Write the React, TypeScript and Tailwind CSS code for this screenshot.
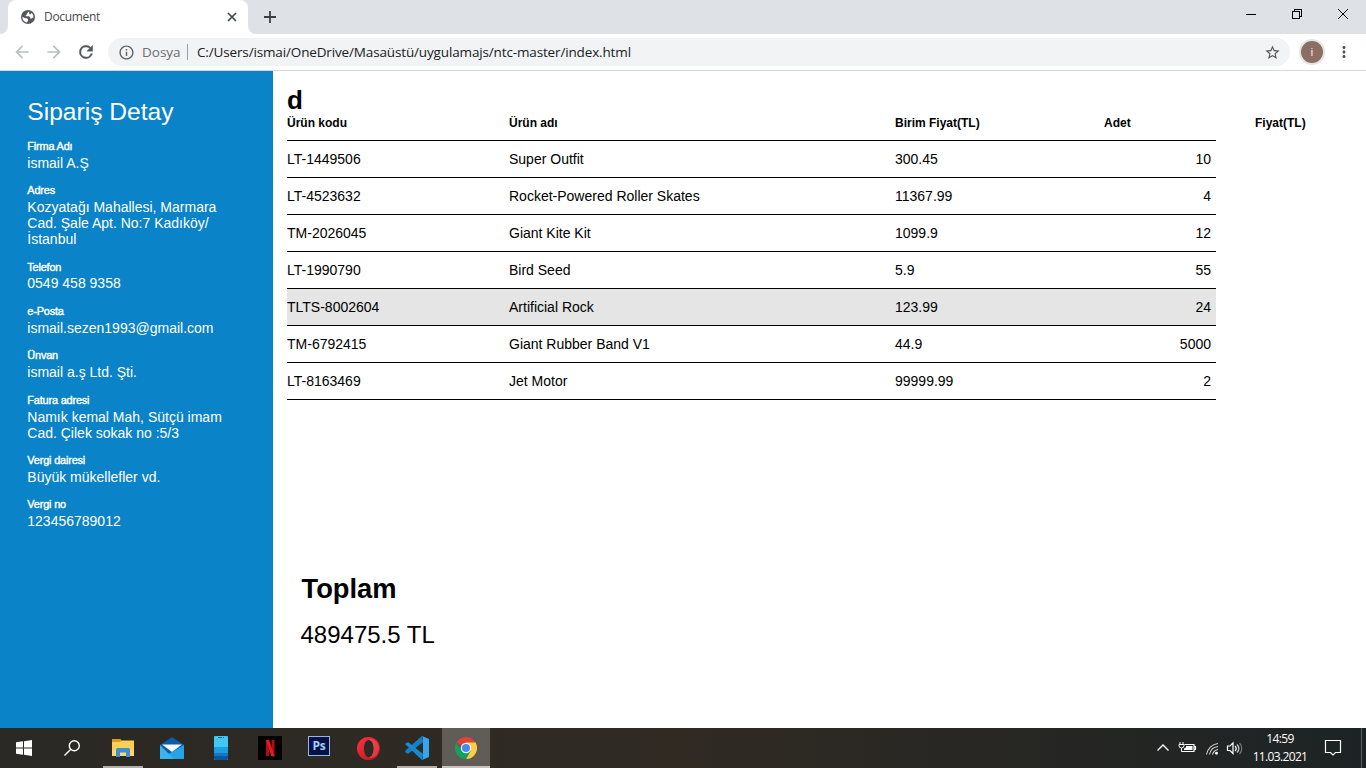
import React from "react";
import {
  MdArrowBack,
  MdArrowForward,
  MdInfoOutline,
  MdStarBorder,
  MdMoreVert,
} from "react-icons/md";

const details: { label: string; lines: string[] }[] = [
  { label: "Firma Adı", lines: ["ismail A.Ş"] },
  { label: "Adres", lines: ["Kozyatağı Mahallesi, Marmara", "Cad. Şale Apt. No:7 Kadıköy/", "İstanbul"] },
  { label: "Telefon", lines: ["0549 458 9358"] },
  { label: "e-Posta", lines: ["ismail.sezen1993@gmail.com"] },
  { label: "Ünvan", lines: ["ismail a.ş Ltd. Şti."] },
  { label: "Fatura adresi", lines: ["Namık kemal Mah, Sütçü imam", "Cad. Çilek sokak no :5/3"] },
  { label: "Vergi dairesi", lines: ["Büyük mükellefler vd."] },
  { label: "Vergi no", lines: ["123456789012"] },
];

const rows = [
  ["LT-1449506", "Super Outfit", "300.45", "10"],
  ["LT-4523632", "Rocket-Powered Roller Skates", "11367.99", "4"],
  ["TM-2026045", "Giant Kite Kit", "1099.9", "12"],
  ["LT-1990790", "Bird Seed", "5.9", "55"],
  ["TLTS-8002604", "Artificial Rock", "123.99", "24"],
  ["TM-6792415", "Giant Rubber Band V1", "44.9", "5000"],
  ["LT-8163469", "Jet Motor", "99999.99", "2"],
];

function TabStrip() {
  return (
    <div className="flex h-[34px] bg-[#dee1e6]">
      <div className="flex w-2 items-end bg-white">
        <div className="h-full w-2 rounded-br-lg bg-[#dee1e6]" />
      </div>
      <div className="bg-[#dee1e6]">
        <div className="flex h-[34px] w-[240px] items-center rounded-t-lg bg-white pl-[13px] pr-2.5">
          <svg className="size-[14px]" viewBox="0 0 14 14">
            <circle cx="7" cy="7" r="7" fill="#54585c" />
            <path
              d="M7.800 1.500L6.200 3v1.200L4.800 5v1.300h3.300l1.100 1.200v1h1.400l1.900-1.300A5.600 5.600 0 0 0 10.600 2.800L9.800 4.300H8.300V3.100zM1.400 6.800l2.800 1.400h1.900l1 1v1.300L6 12.500A5.600 5.600 0 0 1 1.400 6.800z"
              fill="#fff"
            />
          </svg>
          <span className="ml-[9px] flex-1 text-[12px] tracking-[-0.32px] text-[#45494d]">Document</span>
          <svg className="size-3" viewBox="0 0 12 12" stroke="#45494d" strokeWidth="1.7">
            <path d="M2 2l8 8M10 2l-8 8" />
          </svg>
        </div>
      </div>
      <div className="w-2 bg-white">
        <div className="h-full w-2 rounded-bl-lg bg-[#dee1e6]" />
      </div>
      <svg className="ml-2 mt-[11px] size-3" viewBox="0 0 12 12" stroke="#3c4043" strokeWidth="1.8">
        <path d="M6 0v12M0 6h12" />
      </svg>
      <div className="flex-1" />
      <svg className="h-[34px] w-[138px]" viewBox="0 0 138 34" fill="none" stroke="#000" shapeRendering="crispEdges">
        <path d="M18 14.5h10" />
        <path d="M64.500 11.500h7v7h-7zM66.500 11.500v-2h7v7h-2" />
        <path d="M110 9l10 10M120 9l-10 10" shapeRendering="auto" />
      </svg>
    </div>
  );
}

function Toolbar() {
  return (
    <div className="flex h-[37px] items-center border-b border-[#d5d8db] bg-white pl-3">
      <MdArrowBack className="size-5 text-[#bcbec0]" />
      <MdArrowForward className="ml-3 size-5 text-[#bcbec0]" />
      <svg className="ml-3 size-5" viewBox="0 0 24 24" fill="#54585c" stroke="#54585c" strokeWidth="0.5">
        <path d="M17.650 6.350A7.958 7.958 0 0 0 12 4a8 8 0 1 0 7.730 10h-2.080A6 6 0 1 1 12 6c1.660 0 3.140.690 4.220 1.780L13 11h7V4z" />
      </svg>
      <div className="ml-3 flex h-7 w-[1182px] items-center rounded-full bg-[#f1f3f4] pl-2.5 pr-[9px]">
        <MdInfoOutline className="size-[17px] text-[#5f6368]" />
        <span className="ml-[7px] w-[38px] whitespace-nowrap text-[13.5px] text-[#6a6e72]">Dosya</span>
        <span className="ml-[7px] h-4 w-px bg-[#9aa0a6]" />
        <span className="ml-[9px] flex-1 whitespace-nowrap text-[13.500px] tracking-[-0.145px] text-[#202124]">
          C:/Users/ismai/OneDrive/Masaüstü/uygulamajs/ntc-master/index.html
        </span>
        <MdStarBorder className="size-[17px] text-[#54585c]" />
      </div>
      <div className="ml-[9px] flex size-[26px] items-center justify-center rounded-full border-2 border-[#e4e4e5] bg-[#8d6e63] text-[11px] text-white">
        i
      </div>
      <MdMoreVert className="ml-2.5 size-[18px] text-[#4c5054]" />
    </div>
  );
}

function Sidebar() {
  return (
    <aside className="w-[273px] shrink-0 bg-[#0a83c8] pl-[27.300px] pt-[26px] text-white">
      <h1 className="mb-[12.950px] text-[24.6px] leading-[30px]">Sipariş Detay</h1>
      {details.map((d) => (
        <div key={d.label} className="mb-[13.600px]">
          <div className="mb-[2.780px] text-[10.93px] leading-3 tracking-[-0.18px] [-webkit-text-stroke:0.4px_white]">
            {d.label}
          </div>
          {d.lines.map((l) => (
            <div key={l} className="whitespace-nowrap text-[14px] leading-4">
              {l}
            </div>
          ))}
        </div>
      ))}
    </aside>
  );
}

function Orders() {
  return (
    <main className="flex-1 bg-white pl-3.5 pt-3.5 text-black">
      <div className="text-[26px] font-bold leading-[30px]">d</div>
      <div className="flex h-[25px] whitespace-nowrap text-[12px] font-bold leading-4">
        <div className="w-[222px]">Ürün kodu</div>
        <div className="w-[386px]">Ürün adı</div>
        <div className="w-[209px]">Birim Fiyat(TL)</div>
        <div className="w-[151px]">Adet</div>
        <div>Fiyat(TL)</div>
      </div>
      <div className="w-[929px] border-t border-black">
        {rows.map((r, i) => (
          <div
            key={r[0]}
            className={`flex h-[37px] items-center border-b border-black pr-[5px] text-[14px] ${i === 4 ? "bg-[#e5e5e5]" : ""}`}
          >
            <div className="w-[222px]">{r[0]}</div>
            <div className="w-[386px]">{r[1]}</div>
            <div className="w-[209px]">{r[2]}</div>
            <div className="flex-1 text-right">{r[3]}</div>
          </div>
        ))}
      </div>
      <div className="pl-[13.500px] pt-[173px]">
        <h2 className="pl-px text-[27.300px] font-bold leading-8">Toplam</h2>
        <p className="mt-3.5 text-[24px] leading-8">489475.5 TL</p>
      </div>
    </main>
  );
}

function AppSlot({ children, tone = "", bar = "" }: { children: React.ReactNode; tone?: string; bar?: string }) {
  return (
    <div className={`flex h-10 w-12 flex-col items-center ${tone}`}>
      <div className="flex h-[38px] items-center pt-0.5">{children}</div>
      <div className={`h-0.5 ${bar}`} />
    </div>
  );
}

function Taskbar() {
  return (
    <footer className="flex h-10 items-center bg-gradient-to-r from-[#2b2925] via-[#302a23] to-[#1d2324] text-white">
      <AppSlot>
        <svg className="size-4" viewBox="0 0 16 16" fill="#fff">
          <path d="M0 2.300l7-1v6.200H0zM8 1.200L16 0v7.500H8zM0 8.500h7v6.200l-7-1zM8 8.500h8V16l-8-1.200z" />
        </svg>
      </AppSlot>
      <AppSlot>
        <svg className="size-[18px]" viewBox="0 0 18 18" fill="none" stroke="#fff" strokeWidth="1.4">
          <circle cx="11.300" cy="6.700" r="5" />
          <path d="M7.800 10.200L1.500 16.500" />
        </svg>
      </AppSlot>
      <div className="w-[3px]" />
      <AppSlot bar="w-10 bg-[#b3aea9]">
        <svg className="h-[18px] w-[22px]" viewBox="0 0 22 18">
          <path d="M0 0h8l1.500 1.500H22V17H0z" fill="#f9cf57" />
          <path d="M0 0h8l1.200 1.500L8 3H0z" fill="#dc9a16" />
          <path d="M0 11h22v6H0z" fill="#fbd970" />
          <path d="M4 18v-7.500a1.500 1.500 0 0 1 1.500-1.500h11a1.500 1.500 0 0 1 1.500 1.500V18h-4v-4.500H8V18z" fill="#3f8fd0" />
        </svg>
      </AppSlot>
      <div className="w-px" />
      <AppSlot>
        <svg className="h-6 w-6" viewBox="0 0 24 24">
          <path d="M0 9L12 1l12 8v14H0z" fill="#0d5aa7" />
          <path d="M2 8.500h20L12 16z" fill="#f5f7f9" />
          <path d="M24 9v14H0z" fill="#25a3e4" />
          <path d="M0 9l14 14H0z" fill="#36b5ee" />
        </svg>
      </AppSlot>
      <div className="w-px" />
      <AppSlot>
        <svg className="h-6 w-3.5" viewBox="0 0 14 24">
          <rect width="14" height="24" rx="1" fill="#43c6f3" />
          <path d="M0 11h14v6H0z" fill="#1c9de2" />
          <path d="M0 17h14v3H0z" fill="#1277c5" />
          <path d="M0 20h14v3l-1 1H1l-1-1z" fill="#0b569c" />
          <path d="M4 1.500h4M9 1.500h1" stroke="#0e679f" />
        </svg>
      </AppSlot>
      <div className="w-px" />
      <AppSlot>
        <svg className="size-6" viewBox="0 0 24 24">
          <path d="M0 0h24v24H0z" fill="#000" />
          <path d="M8 4h3v16l-3 .5zM13.500 4h3v16.500l-3-.5z" fill="#b20d16" />
          <path d="M8 4h3.200l5.300 16.500-3.200-.5z" fill="#e51b24" />
        </svg>
      </AppSlot>
      <div className="w-px" />
      <AppSlot>
        <div className="-mt-1 flex h-5 w-[22px] items-center justify-center border border-[#8db9ef] bg-[#071243] text-[12px] font-bold leading-none tracking-[-0.3px] text-[#a1cbff]">
          Ps
        </div>
      </AppSlot>
      <div className="w-px" />
      <AppSlot>
        <svg className="size-[23px]" viewBox="0 0 24 24">
          <defs>
            <linearGradient id="operaRed" x1="0" y1="0" x2="1" y2="1">
              <stop stopColor="#ff3443" />
              <stop offset="1" stopColor="#b80e1b" />
            </linearGradient>
          </defs>
          <path
            fill="url(#operaRed)"
            fillRule="evenodd"
            d="M12 0a12 12 0 1 0 0 24a12 12 0 1 0 0-24zM12.300 3c3 0 5 4 5 9s-2 9-5 9-5-4-5-9 2-9 5-9z"
          />
          <path d="M12.300 3c3 0 5 4 5 9s-2 9-5 9c2 2 6 0 7.700-1.500a11 11 0 0 0 0-15C18 2.500 14 1 12.300 3z" fill="#f96b6c" opacity=".45" />
        </svg>
      </AppSlot>
      <div className="w-px" />
      <AppSlot bar="w-10 bg-[#b3aea9]">
        <svg className="size-6" viewBox="0 0 24 24">
          <path d="M17 0l1 6L3 18l-3-2 1-2z" fill="#1580c8" />
          <path d="M0 8l3-2 15 12-1 6z" fill="#168ad2" />
          <path d="M17 0l7 3v18l-7 3 1-2V2z" fill="#35a6ec" />
        </svg>
      </AppSlot>
      <div className="w-px" />
      <AppSlot tone="bg-[#605c57]" bar="w-12 bg-[#c8c3bf]">
        <svg className="size-[22px]" viewBox="0 0 24 24">
          <path d="M12 12L1.600 6A12 12 0 0 1 22.400 6z" fill="#df4437" />
          <path d="M12 12L22.400 6A12 12 0 0 1 12 24l5-9z" fill="#ffcd42" />
          <path d="M12 12l5 3-5 9A12 12 0 0 1 1.600 6L7 15z" fill="#12a260" />
          <path d="M12 6h10.400L17 15z" fill="#ffcd42" />
          <circle cx="12" cy="12" r="5.700" fill="#f2f3f5" />
          <circle cx="12" cy="12" r="4.400" fill="#4688f4" />
        </svg>
      </AppSlot>
      <div className="flex-1" />
      <svg className="h-10 w-[88px]" viewBox="0 0 88 40" fill="none" stroke="#fff" strokeWidth="1.200">
        <path d="M1.500 22.500L7 17l5.500 5.500" strokeWidth="1.400" />
        <path d="M28.500 16.500h9.500v7H27.500M38.500 18.500h1v3h-1" />
        <path d="M30 18h6.500v4h-8.500v-1.500l2-1z" fill="#fff" stroke="none" />
        <path d="M24 14v2.500M27 14v2.500M23 16.500h5v1a2.500 2.500 0 0 1-5 0zM25.500 20v3.500h3" strokeWidth="1" />
        <g strokeWidth="1.100" stroke="#d8dada">
          <path d="M50.500 26.500a13 13 0 0 1 11.500-11M53.500 26.500a10 10 0 0 1 8.500-8M56.500 26.500a7 7 0 0 1 5.500-5" />
          <circle cx="60.500" cy="25.200" r=".9" fill="#fff" stroke="#fff" />
        </g>
        <path d="M71.500 18h2.500l3-3v10.500L74 22.500h-2.500z" />
        <path d="M79 18c1.500 1.500 1.500 3.500 0 5" />
        <path d="M81 16.500c2.500 2.500 2.500 5.500 0 8" stroke="#ccc" />
        <path d="M83.500 15c3 3 3 8 0 11" stroke="#777" />
      </svg>
      <div className="ml-1.5 w-[60px] text-center text-[12px] leading-[18px] tracking-[-0.65px]">
        <div>14:59</div>
        <div>11.03.2021</div>
      </div>
      <svg className="ml-3.5 h-10 w-[18px]" viewBox="0 0 18 40" fill="none" stroke="#fff" strokeWidth="1.200">
        <path d="M1.500 12.500h15v12h-5L9 27l-2.500-2.500h-5z" />
      </svg>
      <div className="ml-[19px] mr-1 h-10 w-px bg-[#5a5f60]" />
    </footer>
  );
}

export default function App() {
  return (
    <div className="flex h-screen w-full flex-col overflow-hidden font-['Open_Sans','Noto_Sans',sans-serif]">
      <TabStrip />
      <Toolbar />
      <div className="flex h-[657px] font-['Liberation_Sans',Arial,sans-serif]">
        <Sidebar />
        <Orders />
      </div>
      <Taskbar />
    </div>
  );
}
